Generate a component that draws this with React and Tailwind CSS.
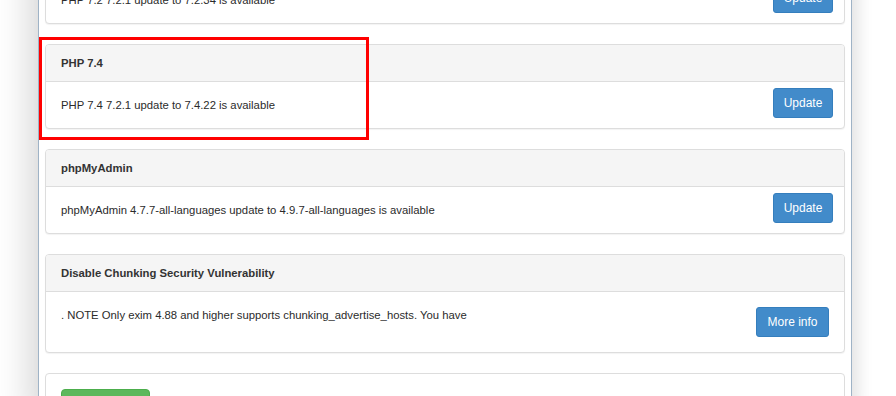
const font = { fontFamily: '"Liberation Sans", Arial, sans-serif' };

const updates = [
  { title: 'PHP 7.2', text: 'PHP 7.2 7.2.1 update to 7.2.34 is available' },
  { title: 'PHP 7.4', text: 'PHP 7.4 7.2.1 update to 7.4.22 is available' },
  { title: 'phpMyAdmin', text: 'phpMyAdmin 4.7.7-all-languages update to 4.9.7-all-languages is available' },
];

function Panel({ title, children }) {
  return (
    <div className="mb-[20px] rounded-[4px] border border-[#dddddd] bg-white shadow-[0_1px_1px_rgba(0,0,0,0.05)]">
      <div className="h-[37px] flex items-center px-[15px] bg-[#f5f5f5] border-b border-[#dddddd] rounded-t-[3px]">
        <span className="text-[11.3px] font-bold leading-[16px] text-[#333333]">{title}</span>
      </div>
      {children}
    </div>
  );
}

function BlueButton({ label, className = '' }) {
  return (
    <button className={'h-[30px] rounded-[3px] bg-[#428bca] border border-[#357ebd] text-white text-[12px] ' + className}>
      {label}
    </button>
  );
}

export default function App() {
  return (
    <div className="relative h-[396px] w-[896px] overflow-hidden bg-white" style={font}>
      <div className="ml-[38px] w-[814px] h-[480px] -mt-[61px] bg-white border-l border-r border-[#9fb3c6] px-[6px] shadow-[-12px_0_30px_rgba(0,0,0,0.14),8px_0_14px_rgba(0,0,0,0.07)]">
        {updates.map((u) => (
          <Panel key={u.title} title={u.title}>
            <div className="h-[46px] flex items-center justify-between pl-[15px] pr-[11px]">
              <span className="text-[11.3px] leading-[16px] text-[#2b2b2b]">{u.text}</span>
              <BlueButton label="Update" className="w-[60px] mb-[4px]" />
            </div>
          </Panel>
        ))}

        <Panel title="Disable Chunking Security Vulnerability">
          <div className="flex items-start justify-between p-[15px]">
            <span className="text-[11.3px] leading-[16px] text-[#2b2b2b]">
              . NOTE Only exim 4.88 and higher supports chunking_advertise_hosts. You have
            </span>
            <BlueButton label="More info" className="w-[73px]" />
          </div>
        </Panel>

        <div className="rounded-[4px] border border-[#dddddd] bg-white p-[15px]">
          <button className="h-[30px] w-[89px] rounded-[4px] bg-[#5cb85c] border border-[#4cae4c] text-white text-[12px]">
            Update all
          </button>
        </div>
      </div>

      <div className="absolute left-[39px] top-[37px] w-[330px] h-[103px] border-[3px] border-[#ff0000]"></div>
    </div>
  );
}
